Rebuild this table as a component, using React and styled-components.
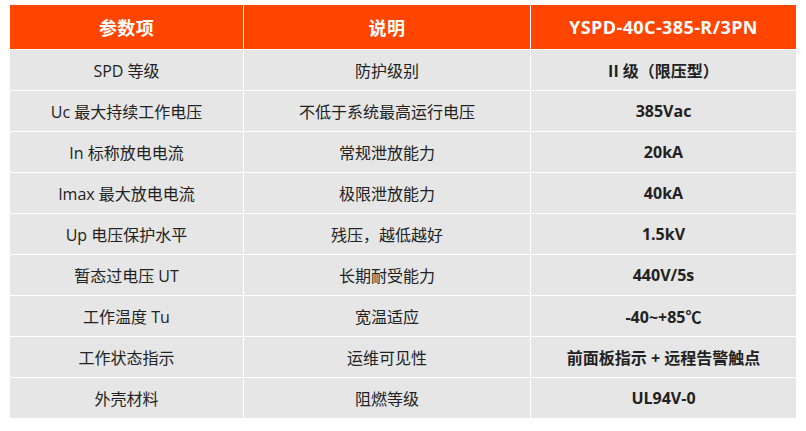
import React from "react";
import styled, { createGlobalStyle } from "styled-components";

const Global = createGlobalStyle`
  html, body { margin: 0; padding: 0; background: #ffffff; }
  body { font-family: "Open Sans", "Noto Sans CJK SC", sans-serif; }
`;

const Page = styled.div`
  padding: 4px 0 0 9px;
`;

const Table = styled.table`
  border-collapse: separate;
  border-spacing: 1px;
  table-layout: fixed;
  width: 787px;
  background: #ffffff;
`;

const HeadCell = styled.th`
  height: 44px;
  padding: 0;
  background: #ff4500;
  color: #ffffff;
  font-size: 18px;
  letter-spacing: 0.4px;
  font-weight: 700;
  text-align: center;
  vertical-align: middle;
`;

const Cell = styled.td`
  height: 40px;
  padding: 0;
  background: #e6e6e6;
  color: #222222;
  font-size: 16px;
  font-weight: ${(p) => (p.$bold ? 700 : 400)};
  text-align: center;
  vertical-align: middle;
`;

const rows = [
  ["SPD 等级", "防护级别", "II 级（限压型）"],
  ["Uc 最大持续工作电压", "不低于系统最高运行电压", "385Vac"],
  ["In 标称放电电流", "常规泄放能力", "20kA"],
  ["Imax 最大放电电流", "极限泄放能力", "40kA"],
  ["Up 电压保护水平", "残压，越低越好", "1.5kV"],
  ["暂态过电压 UT", "长期耐受能力", "440V/5s"],
  ["工作温度 Tu", "宽温适应", "-40~+85℃"],
  ["工作状态指示", "运维可见性", "前面板指示 + 远程告警触点"],
  ["外壳材料", "阻燃等级", "UL94V-0"],
];

export default function App() {
  return (
    <>
      <Global />
      <Page>
        <Table>
          <colgroup>
            <col style={{ width: 233 }} />
            <col style={{ width: 286 }} />
            <col style={{ width: 265 }} />
          </colgroup>
          <thead>
            <tr>
              <HeadCell>参数项</HeadCell>
              <HeadCell>说明</HeadCell>
              <HeadCell>YSPD-40C-385-R/3PN</HeadCell>
            </tr>
          </thead>
          <tbody>
            {rows.map((r) => (
              <tr key={r[0]}>
                <Cell>{r[0]}</Cell>
                <Cell>{r[1]}</Cell>
                <Cell $bold>{r[2]}</Cell>
              </tr>
            ))}
          </tbody>
        </Table>
      </Page>
    </>
  );
}
